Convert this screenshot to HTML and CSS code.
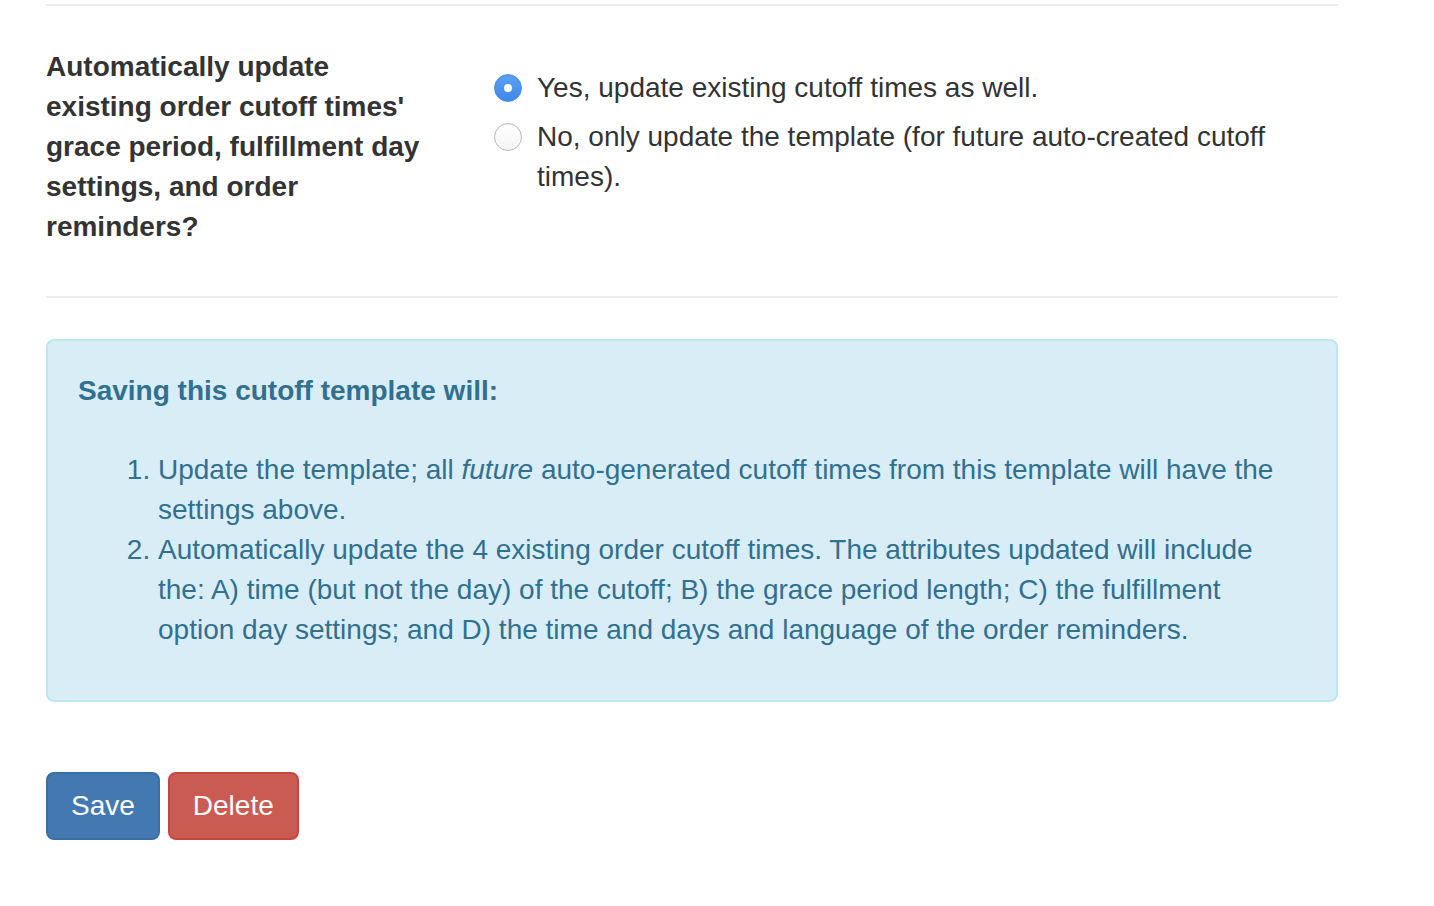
FILE: index.html
```html
<!DOCTYPE html>
<html>
<head>
<meta charset="utf-8">
<link rel="stylesheet" href="styles.css">
</head>
<body>
<div class="container">
  <hr class="rule rule-top">
  <div class="form-row">
    <div class="field-label">Automatically update existing order cutoff times' grace period, fulfillment day settings, and order reminders?</div>
    <div class="field-options">
      <label class="radio">
        <span class="radio-dot checked"></span>
        <span class="radio-text">Yes, update existing cutoff times as well.</span>
      </label>
      <label class="radio">
        <span class="radio-dot"></span>
        <span class="radio-text">No, only update the template (for future auto-created cutoff times).</span>
      </label>
    </div>
  </div>
  <hr class="rule rule-mid">
  <div class="alert">
    <div class="alert-title">Saving this cutoff template will:</div>
    <ol class="alert-list">
      <li>Update the template; all <em>future</em> auto-generated cutoff times from this template will have the settings above.</li>
      <li>Automatically update the 4 existing order cutoff times. The attributes updated will include the: A) time (but not the day) of the cutoff; B) the grace period length; C) the fulfillment option day settings; and D) the time and days and language of the order reminders.</li>
    </ol>
  </div>
  <div class="actions">
    <button class="btn btn-primary">Save</button>
    <button class="btn btn-danger">Delete</button>
  </div>
</div>
</body>
</html>
```
FILE: styles.css
```css
html, body {
  margin: 0;
  padding: 0;
  background: #fff;
}
body {
  font-family: "Liberation Sans", Arial, Helvetica, sans-serif;
  font-size: 28px;
  line-height: 40px;
  color: #333;
}
.container {
  width: 1292px;
  margin-left: 46px;
}
.rule {
  border: 0;
  height: 2px;
  background: #eeeeee;
  margin: 0;
}
.rule-top {
  margin-top: 4px;
}
.form-row {
  display: flex;
  gap: 60px;
  padding-top: 41px;
}
.field-label {
  width: 388px;
  flex: none;
  font-weight: bold;
}
.field-options {
  flex: 1;
  padding-top: 21px;
  display: flex;
  flex-direction: column;
  gap: 9px;
}
.radio {
  display: flex;
  align-items: flex-start;
  gap: 15px;
}
.radio-dot {
  flex: none;
  width: 26px;
  height: 26px;
  margin-top: 6px;
  border-radius: 50%;
  border: 1px solid #b9b9b9;
  background: linear-gradient(#ffffff, #f4f4f4);
  box-shadow: inset 0 1px 1px rgba(0,0,0,0.06);
  display: flex;
  align-items: center;
  justify-content: center;
}
.radio-dot.checked {
  border-color: #4a8fe6;
  background: linear-gradient(#5ca2f3, #3e87e8);
}
.radio-dot.checked::after {
  content: "";
  width: 8px;
  height: 8px;
  border-radius: 50%;
  background: #fff;
}
.rule-mid {
  margin-top: 49px;
}
.alert {
  margin-top: 41px;
  background: #d9edf7;
  border: 2px solid #bce8f1;
  border-radius: 8px;
  padding: 30px;
  color: #31708f;
}
.alert-title {
  font-weight: bold;
}
.alert-list {
  margin: 39px 0 20px;
  padding-left: 80px;
  padding-right: 20px;
}
.actions {
  margin-top: 70px;
  display: flex;
  gap: 8px;
}
.btn {
  font-family: inherit;
  font-size: 28px;
  line-height: 40px;
  padding: 12px 23px;
  border-radius: 8px;
  border: 2px solid transparent;
  color: #fff;
}
.btn-primary {
  background: #4379b0;
  border-color: #3a6ea6;
}
.btn-danger {
  background: #ca5b53;
  border-color: #c4473f;
}
```
